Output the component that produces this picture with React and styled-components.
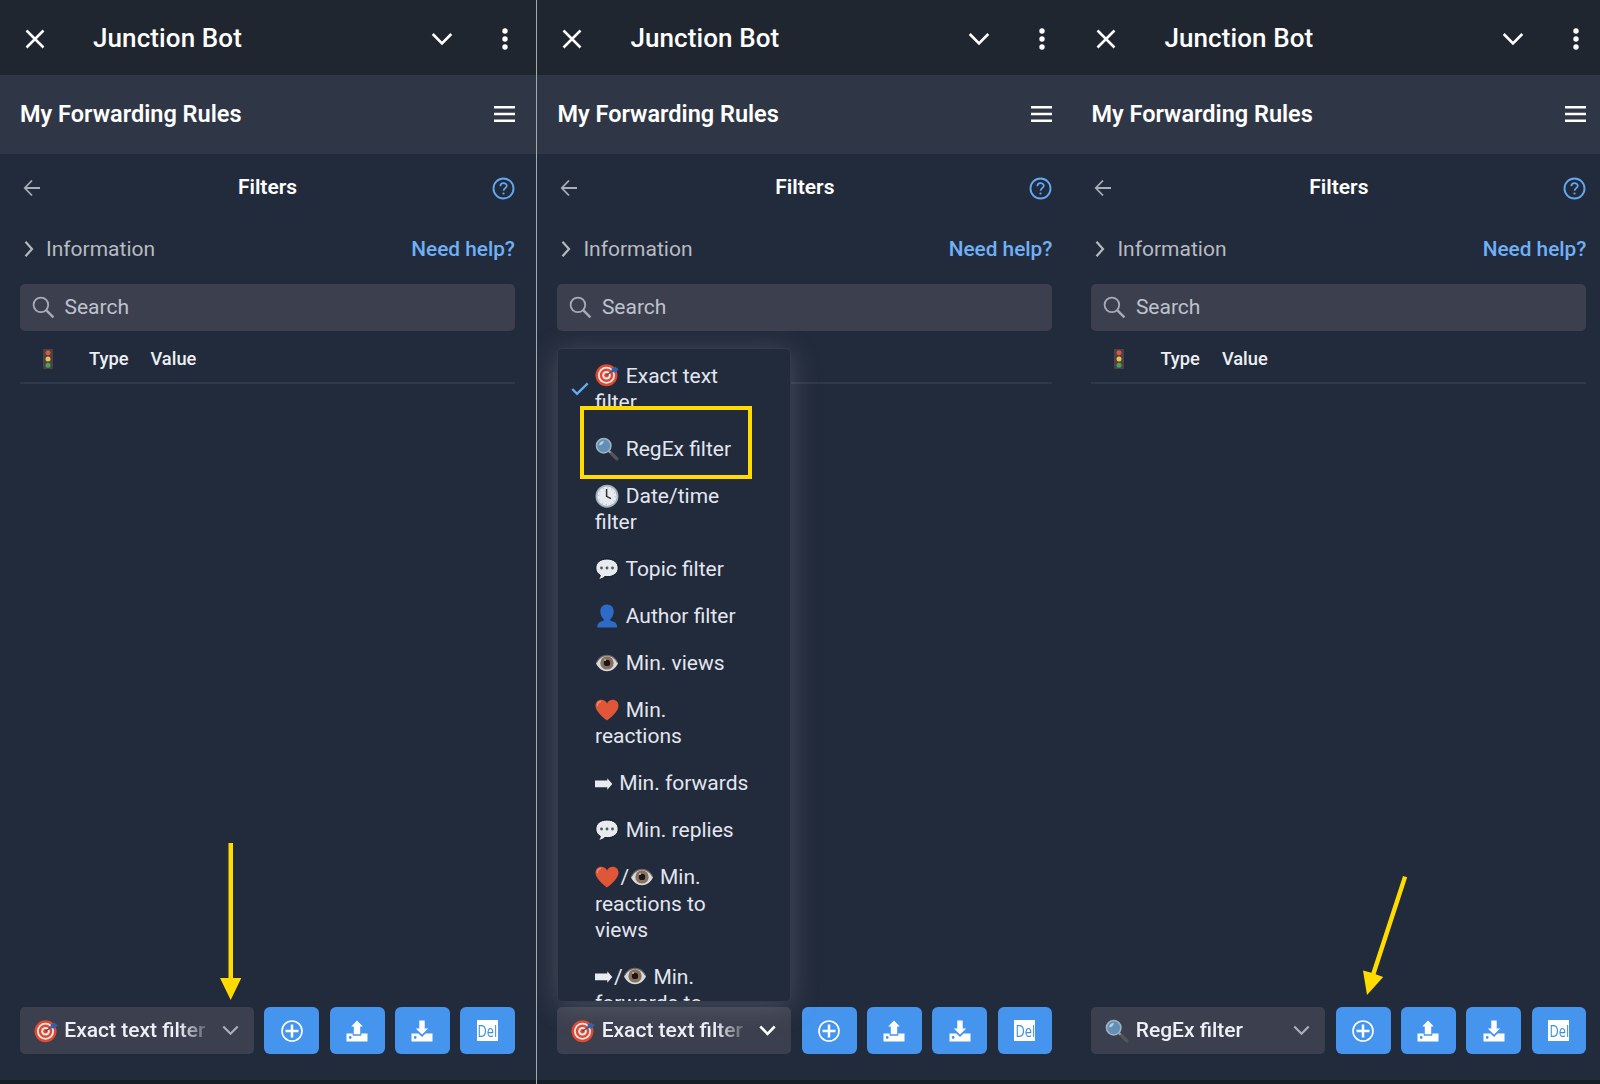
import React from "react";
import styled, { createGlobalStyle, css } from "styled-components";

const GlobalStyle = createGlobalStyle`
  *, *::before, *::after { box-sizing: border-box; }
  html, body { margin: 0; padding: 0; background: #222b3b; }
  body { font-family: Roboto, "Liberation Sans", sans-serif; color: #fff; overflow: hidden; }
  svg { display: block; flex: none; }
`;

const Page = styled.main`
  display: flex;
  width: 1600px;
  height: 1084px;
  overflow: hidden;
`;

const Divider = styled.div`
  flex: none;
  width: 1px;
  background: #a6a9ab;
`;

const Screen = styled.section`
  position: relative;
  flex: none;
  display: flex;
  flex-direction: column;
  width: ${(p) => p.$width}px;
  height: 100%;
  background: #222b3b;
  overflow: hidden;
`;

const AppHeader = styled.header`
  display: flex;
  align-items: center;
  flex: none;
  width: 535px;
  height: 75px;
  padding: 2px 23px 0 25px;
`;

const AppName = styled.h1`
  flex: 1;
  margin: -2px 0 0 48px;
  font-size: 26px;
  line-height: 30px;
  font-weight: 500;
  letter-spacing: 0.1px;
`;

const HeaderIcons = styled.div`
  display: flex;
  align-items: center;
  gap: 42px;
`;

const Band = styled.div`
  flex: none;
  padding-left: ${(p) => p.$inset}px;
  background: ${(p) => p.$tone};
`;

const RulesBar = styled.div`
  display: flex;
  align-items: center;
  justify-content: space-between;
  width: 535px;
  height: 79px;
  padding: 0 20px 2px;
`;

const RulesTitle = styled.h2`
  margin: 0;
  font-size: 23.5px;
  line-height: 28px;
  font-weight: 600;
`;

const Content = styled.div`
  flex: 1;
  display: flex;
  flex-direction: column;
  width: 535px;
  margin-left: ${(p) => p.$inset}px;
  padding: 0 20px 26px;
`;

const TitleRow = styled.div`
  display: grid;
  grid-template-columns: 24px 1fr 24px;
  align-items: center;
  height: 69px;
`;

const PageTitle = styled.h3`
  margin: 0 0 4px;
  text-align: center;
  font-size: 21px;
  line-height: 26px;
  font-weight: 600;
`;

const BackIcon = styled.svg`
  margin: -1px 0 0 2.5px;
`;

const HelpIcon = styled.svg`
  justify-self: end;
`;

const InfoRow = styled.div`
  display: flex;
  align-items: center;
  height: 61px;
  padding: 0 0 9px 4px;
  font-size: 21px;
  line-height: 26px;
`;

const InfoLabel = styled.span`
  flex: 1;
  margin-left: 11px;
  color: #b8bbc2;
`;

const HelpLink = styled.a`
  color: #70b0f6;
  font-size: 20.8px;
  font-weight: 500;
`;

const field = css`
  display: flex;
  align-items: center;
  height: 47px;
  border-radius: 5px;
  background: #3c404e;
`;

const SearchBox = styled.div`
  ${field}
  gap: 9.5px;
  padding: 0 12px 1px;
  color: #bec2cd;
  font-size: 21px;
  line-height: 26px;
`;

const TableHead = styled.div`
  display: flex;
  align-items: center;
  height: 53px;
  padding: 5px 0 0 23px;
  border-bottom: 2px solid #303949;
  color: #eceff4;
  font-size: 18.3px;
  line-height: 22px;
  font-weight: 500;
`;

const HeadCell = styled.span`
  margin-left: ${(p) => p.$gap}px;
`;

const ActionBar = styled.footer`
  display: flex;
  gap: 10.4px;
  margin-top: auto;
`;

const Select = styled.div`
  ${field}
  width: 234px;
  padding: 0 15px 1px 13.5px;
  font-size: 21px;
  line-height: 26px;
  font-weight: 500;
  color: #eef0f7;
`;

const SelectText = styled.span`
  flex: 1;
  margin: 0 9px 0 5px;
  overflow: hidden;
  white-space: nowrap;
  mask-image: linear-gradient(to right, #000 calc(100% - 34px), transparent);
`;

const ActionButton = styled.button`
  flex: 1;
  display: flex;
  align-items: center;
  justify-content: center;
  height: 47px;
  padding: 0;
  border: 0;
  border-radius: 6px;
  background: #4595ef;
  color: #fff;
`;

const DelBadge = styled.span`
  display: flex;
  align-items: center;
  justify-content: center;
  width: 21px;
  height: 21px;
  background: #fff;
  color: #3f8fea;
`;

const DelText = styled.span`
  font-family: "Open Sans", "Noto Sans", sans-serif;
  font-size: 16px;
  line-height: 20px;
  transform: scaleX(0.8);
`;

const SystemStrip = styled.div`
  flex: none;
  height: 4px;
  background: #171d27;
`;

const Menu = styled.ul`
  position: absolute;
  left: 20px;
  top: 348px;
  width: 234px;
  height: 654px;
  margin: 0;
  padding: 3.5px 0 0;
  list-style: none;
  overflow: hidden;
  border: 1px solid #323b4a;
  border-radius: 5px;
  background: #222b3b;
  box-shadow: 0 4px 28px rgba(160, 162, 172, 0.3);
`;

const MenuItem = styled.li`
  display: grid;
  grid-template-columns: 37px 160px;
  align-items: center;
  padding: 10.4px 0;
  color: #e3e6f0;
  font-size: 21px;
  line-height: 26.2px;
`;

const CheckCell = styled.span`
  padding-left: 13px;
`;

const Emoji = styled.svg`
  && { display: inline-block; }
  width: ${(p) => p.$w || 24}px;
  height: 24px;
  margin: -4px 1.2px 0 0.4px;
  vertical-align: middle;
  ${Select} & { margin: 1px 1.2px 0 0.6px; }
`;

const Highlight = styled.div`
  position: absolute;
  left: 42.5px;
  top: 406px;
  width: 172.5px;
  height: 73px;
  border: 4.5px solid #ffdb00;
`;

const Pointer = styled.svg`
  position: absolute;
  left: ${(p) => p.$x}px;
  top: ${(p) => p.$y}px;
`;

const DotsWrap = styled.span`
  display: flex;
  padding: 0 4px 0 7px;
`;

const Target = () => (
  <Emoji viewBox="0 0 24 24">
    <circle cx="11.5" cy="12.3" r="11" fill="#df4a32" />
    <circle cx="11.5" cy="12.3" r="8.500" fill="#f3e9e8" />
    <circle cx="11.5" cy="12.3" r="6.700" fill="#df4a32" />
    <circle cx="11.5" cy="12.3" r="4.300" fill="#f3e9e8" />
    <circle cx="11.5" cy="12.3" r="2.300" fill="#df4a32" />
    <path d="M11.5 12.3 18 7.500" stroke="#52455c" strokeWidth="1.100" />
    <path d="m16 8.900 1-3.700 4-1.500.4 1.400 2.500.9-3.300 3.400z" fill="#2f62ae" />
  </Emoji>
);

const Glass = () => (
  <Emoji viewBox="0 0 24 24">
    <path d="m13.8 14 2.700 2.300" stroke="#8b9aa6" strokeWidth="2.400" />
    <path d="m16.8 16.8 5 5" stroke="#555557" strokeWidth="3.400" strokeLinecap="round" />
    <circle cx="8.700" cy="8.700" r="7.200" fill="#628fb5" stroke="#9db1bf" strokeWidth="1.600" />
    <path d="M4 8.500C4.400 5.600 6.300 4 9 3.800c-.4 2.600-2 4.300-5 4.700Z" fill="#b3d0e2" />
  </Emoji>
);

const Clock = () => (
  <Emoji viewBox="0 0 24 24">
    <circle cx="12" cy="12.200" r="10.600" fill="#e8eaed" stroke="#9fb3c0" strokeWidth="1.700" />
    <circle cx="12" cy="12.200" r="8.400" fill="none" stroke="#a5adb5" strokeWidth="1" strokeDasharray="1 3.400" />
    <path d="M11.600 5v7.400l4.400 2.200" fill="none" stroke="#2b3038" strokeWidth="1.500" />
  </Emoji>
);

const Bubble = () => (
  <Emoji viewBox="0 0 24 24">
    <path
      d="M12 2C5.500 2 .8 5.500.8 11c0 3.300 1.700 5.800 4.500 7.300-.2 1.700-.9 3-2 4.100 2.800-.1 5-1.200 6.500-2.900l2.200.2c6.500 0 11.200-3.300 11.200-8.700C23.200 5.500 18.500 2 12 2Z"
      fill="#e7eaef"
      stroke="#10151d"
      strokeWidth="1"
    />
    <circle cx="6.500" cy="11" r="1.450" fill="#54585f" />
    <circle cx="12" cy="11" r="1.450" fill="#54585f" />
    <circle cx="17.500" cy="11" r="1.450" fill="#54585f" />
  </Emoji>
);

const Person = () => (
  <Emoji viewBox="0 0 24 24">
    <path
      d="M12 .5c4.300 0 6.700 2.900 6.700 7 0 3.200-1.500 6.300-3.400 7.700v1.600c3.900.5 6.900 2.200 6.900 6.700H2.200c0-4.500 3-6.200 6.500-6.700v-1.600C6.800 13.800 5.300 10.700 5.300 7.500c0-4.100 2.400-7 6.700-7Z"
      fill="#2e6bc6"
    />
  </Emoji>
);

const Eye = () => (
  <Emoji viewBox="0 0 24 24">
    <path d="M1 12.500C3.500 7.400 7.300 4.400 12 4.400s8.500 3 11 8.100c-2.500 4.900-6.300 7.700-11 7.700s-8.500-2.800-11-7.700Z" fill="#d8dbde" />
    <path d="M1.500 11.500C4 6.800 7.500 4.400 12 4.400s8 2.400 10.500 7.100" fill="none" stroke="#6d6766" strokeWidth="1.100" />
    <circle cx="12" cy="11.900" r="6.700" fill="#8a705b" />
    <circle cx="12" cy="11.900" r="3.200" fill="#17171a" />
    <circle cx="10" cy="9" r="1" fill="#cdbbae" />
  </Emoji>
);

const Heart = () => (
  <Emoji viewBox="0 0 24 24">
    <path d="M12 22.600C8 19.300.5 13.600.5 7.800c0-3.700 2.600-6 5.700-6 2.600 0 4.800 1.200 5.800 3.600 1-2.400 3.200-3.600 5.800-3.600 3.100 0 5.700 2.300 5.700 6 0 5.800-7.500 11.500-11.500 14.800Z" fill="#df5638" />
    <path d="M2.300 7.700c.1-2.300 1.400-3.800 3.300-4.200" fill="none" stroke="#ef8c73" strokeWidth="1.300" strokeLinecap="round" />
  </Emoji>
);

const RightArrow = () => (
  <Emoji $w={17.4} viewBox="0 0 17.4 24">
    <path d="M0 9.600h12.300V7.300L17.300 13l-5 5.700v-2.400H0z" fill="#e8ebf4" />
  </Emoji>
);

const TrafficLight = () => (
  <svg width="10" height="20" viewBox="0 0 10 20">
    <rect width="10" height="20" rx="1" fill="#4c4144" />
    <circle cx="5" cy="3.800" r="2.500" fill="#d9573f" />
    <circle cx="5" cy="10.100" r="2.500" fill="#eec14c" />
    <circle cx="5" cy="16.300" r="2.500" fill="#4f9f55" />
  </svg>
);

const Stroke = ({ d, w, h, color = "#fff", size = 2.5 }) => (
  <svg width={w} height={h} viewBox={`0 0 ${w} ${h}`} fill="none" stroke={color} strokeWidth={size}>
    <path d={d} />
  </svg>
);

const Dots = () => (
  <DotsWrap>
    <svg width="6" height="22" viewBox="0 0 6 22" fill="#fff">
      <circle cx="3" cy="3" r="2.700" />
      <circle cx="3" cy="11" r="2.700" />
      <circle cx="3" cy="19" r="2.700" />
    </svg>
  </DotsWrap>
);

const PlusIcon = () => (
  <svg width="22" height="22" viewBox="0 0 22 22" fill="none" stroke="#fff">
    <circle cx="11" cy="11" r="10" strokeWidth="1.600" />
    <path d="M11 4.500v13M4.500 11h13" strokeWidth="2.500" />
  </svg>
);

const UploadIcon = () => (
  <svg width="22" height="22" viewBox="0 0 22 22" fill="#fff">
    <path d="M11 .5 16.800 6.500H14.200v7.800H7.800V6.500H5.200z" />
    <path d="M.5 13.500h6.200v2.300h8.600v-2.300h6.200v8H.5zm3.700 2.600a1.400 1.400 0 1 0 0 2.800 1.400 1.400 0 0 0 0-2.800Z" fillRule="evenodd" />
  </svg>
);

const DownloadIcon = () => (
  <svg width="22" height="22" viewBox="0 0 22 22" fill="#fff">
    <path d="M8.300.5h5.400v8h3.500L11 14.600 4.800 8.500h3.500z" />
    <path d="M.5 13.500h7L11 17l3.500-3.500h7v8H.5zm3.700 2.600a1.400 1.400 0 1 0 0 2.800 1.400 1.400 0 0 0 0-2.800Z" fillRule="evenodd" />
  </svg>
);

const menuItems = [
  { label: <><Target /> Exact text filter</>, checked: true },
  { label: <><Glass /> RegEx filter</> },
  { label: <><Clock /> Date/time filter</> },
  { label: <><Bubble /> Topic filter</> },
  { label: <><Person /> Author filter</> },
  { label: <><Eye /> Min. views</> },
  { label: <><Heart /> Min. reactions</> },
  { label: <><RightArrow /> Min. forwards</> },
  { label: <><Bubble /> Min. replies</> },
  { label: <><Heart />/<Eye /> Min. reactions to views</> },
  { label: <><RightArrow />/<Eye /> Min. forwards to views</> },
];

function FilterMenu() {
  return (
    <Menu>
      {menuItems.map((item, i) => (
        <MenuItem key={i}>
          <CheckCell>
            {item.checked && <Stroke w={18} h={14} color="#62a9f2" size={2.4} d="M1.300 7 6 11.800 16.700 1.300" />}
          </CheckCell>
          <span>{item.label}</span>
        </MenuItem>
      ))}
    </Menu>
  );
}

function Phone({ width, inset = 0, icon, value, open, children }) {
  return (
    <Screen $width={width}>
      <Band $tone="#20262f" $inset={inset}>
        <AppHeader>
          <Stroke w={20} h={20} d="m1.500 1.500 17 17m0-17-17 17" />
          <AppName>Junction Bot</AppName>
          <HeaderIcons>
            <Stroke w={22} h={14} size={2.6} d="m1.700 2 9.300 9.500L20.300 2" />
            <Dots />
          </HeaderIcons>
        </AppHeader>
      </Band>
      <Band $tone="#2f3747" $inset={inset}>
        <RulesBar>
          <RulesTitle>My Forwarding Rules</RulesTitle>
          <Stroke w={21} h={18} size={2.4} d="M0 2.200h21M0 9h21M0 15.800h21" />
        </RulesBar>
      </Band>
      <Content $inset={inset}>
        <TitleRow>
          <BackIcon width="18" height="18" viewBox="0 0 18 18" fill="none" stroke="#a9afb8" strokeWidth="1.800">
            <path d="M9 1.500 1.800 9 9 16.500M1.800 9H17" />
          </BackIcon>
          <PageTitle>Filters</PageTitle>
          <HelpIcon width="23" height="23" viewBox="0 0 23 23" fill="none" stroke="#62a8f3" strokeWidth="1.900">
            <circle cx="11.500" cy="11.500" r="10" />
            <path d="M8.300 9.200c.1-2 1.300-3.100 3.200-3.100s3.300 1 3.300 2.700c0 2.300-3.200 2.500-3.200 5" strokeWidth="1.700" />
            <circle cx="11.500" cy="16.500" r="1.100" fill="#62a8f3" stroke="none" />
          </HelpIcon>
        </TitleRow>
        <InfoRow>
          <Stroke w={11} h={18} size={2.2} color="#b4b8c0" d="m1.500 1.700 6.500 7.300-6.500 7.300" />
          <InfoLabel>Information</InfoLabel>
          <HelpLink>Need help?</HelpLink>
        </InfoRow>
        <SearchBox>
          <svg width="23" height="23" viewBox="0 0 23 23" fill="none" stroke="#a9acb5" strokeWidth="1.800">
            <circle cx="8.900" cy="8.900" r="7.300" />
            <path d="m14.200 14.200 7.200 7.200" strokeWidth="2.400" />
          </svg>
          Search
        </SearchBox>
        <TableHead>
          <TrafficLight />
          <HeadCell $gap={36}>Type</HeadCell>
          <HeadCell $gap={22}>Value</HeadCell>
        </TableHead>
        <ActionBar>
          <Select>
            {icon}
            <SelectText>{value}</SelectText>
            <Stroke w={17} h={11} size={open ? 2.6 : 2.2} color={open ? "#fff" : "#a9aeb9"} d="m1.300 1.500 7.200 7.300 7.200-7.300" />
          </Select>
          <ActionButton><PlusIcon /></ActionButton>
          <ActionButton><UploadIcon /></ActionButton>
          <ActionButton><DownloadIcon /></ActionButton>
          <ActionButton><DelBadge><DelText>Del</DelText></DelBadge></ActionButton>
        </ActionBar>
      </Content>
      <SystemStrip />
      {children}
    </Screen>
  );
}

export default function App() {
  return (
    <>
      <GlobalStyle />
      <Page>
        <Phone width={536} icon={<Target />} value="Exact text filter">
          <Pointer $x={219} $y={843} width="24" height="157" viewBox="0 0 24 157" fill="#ffdb00">
            <path d="M9.500 0h4.500v135h8.300L11.700 157 1 135h8.500z" />
          </Pointer>
        </Phone>
        <Divider />
        <Phone width={534} inset={0.4} icon={<Target />} value="Exact text filter" open>
          <FilterMenu />
          <Highlight />
        </Phone>
        <Phone width={529} inset={0.4} icon={<Glass />} value="RegEx filter">
          <Pointer $x={290} $y={874} width="50" height="124" viewBox="0 0 50 124" fill="#ffdb00">
            <path d="m42 2 4.200 1.300-31.600 97 7.600 2.600L6 121 2 96.500l8.400 2.200z" />
          </Pointer>
        </Phone>
      </Page>
    </>
  );
}
